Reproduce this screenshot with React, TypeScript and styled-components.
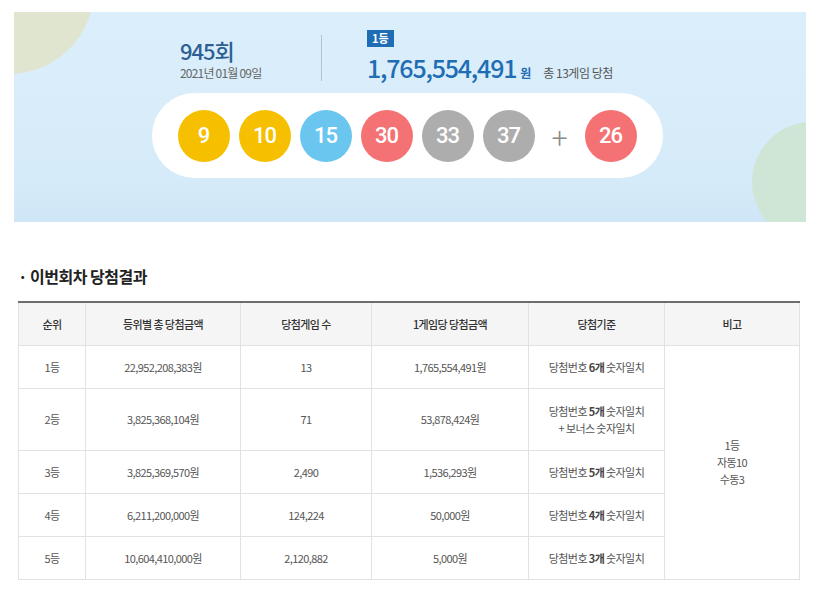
import React from "react";
import styled, { createGlobalStyle } from "styled-components";

const Global = createGlobalStyle`
  body { margin: 0; background: #fff; font-family: "Noto Sans CJK KR", "Noto Sans", sans-serif; }
`;

const Page = styled.div`
  width: 824px;
  padding: 12px 18px 0 14px;
  box-sizing: border-box;
`;

const Banner = styled.div`
  position: relative;
  overflow: hidden;
  height: 210px;
  background: linear-gradient(180deg, #dbeefb 0%, #d6ebf9 80%, #cfe6f7 100%);
  display: flex;
  flex-direction: column;
  align-items: center;
  width: 792px;
`;

const Blob = styled.div<{ $pos: "tl" | "br" }>`
  position: absolute;
  border-radius: 50%;
  background: ${(p) => (p.$pos === "tl" ? "#dfe5cf" : "#cfe6d6")};
  width: ${(p) => (p.$pos === "tl" ? "170px" : "120px")};
  height: ${(p) => (p.$pos === "tl" ? "170px" : "120px")};
  ${(p) => (p.$pos === "tl" ? "left:-90px; top:-108px;" : "right:-66px; bottom:-20px;")}
`;

const Info = styled.div`
  display: flex;
  align-items: center;
  margin-top: 18px;
  margin-left: 140px;
  width: 600px;
`;

const Draw = styled.div`
  width: 141px;
  display: flex;
  flex-direction: column;
`;

const DrawNo = styled.div`
  font-size: 22px;
  font-weight: 500;
  color: #2d5f93;
  letter-spacing: -1px;
  line-height: 30px;
`;

const DateText = styled.div`
  font-size: 12px;
  color: #666;
  letter-spacing: -0.8px;
  line-height: 16px;
`;

const Divider = styled.div`
  width: 1px;
  height: 46px;
  background: #aac4d8;
  margin-right: 45px;
`;

const Prize = styled.div`
  display: flex;
  flex-direction: column;
  align-items: flex-start;
`;

const Badge = styled.span`
  background: #1f6db4;
  color: #fff;
  font-size: 11px;
  font-weight: 700;
  padding: 0 5px;
  line-height: 17px;
`;

const AmountRow = styled.div`
  display: flex;
  align-items: baseline;
  gap: 4px;
  margin-top: 2px;
`;

const Amount = styled.span`
  font-size: 25px;
  color: #1f6db4;
  font-weight: 500;
  letter-spacing: -1.2px;
`;

const Won = styled.span`
  font-size: 12px;
  color: #1f6db4;
  font-weight: 700;
  margin-right: 8px;
`;

const Games = styled.span`
  font-size: 12px;
  color: #555;
  letter-spacing: -0.5px;
`;

const Pill = styled.div`
  margin-top: 8px;
  margin-left: -6px;
  width: 511px;
  height: 85px;
  border-radius: 43px;
  background: #fff;
  display: flex;
  align-items: center;
  justify-content: center;
  gap: 9px;
`;

const Ball = styled.div<{ $c: string }>`
  width: 52px;
  height: 52px;
  border-radius: 50%;
  background: ${(p) => p.$c};
  color: #fff;
  font-size: 22px;
  font-weight: 500;
  display: flex;
  align-items: center;
  justify-content: center;
  letter-spacing: -1px;
  font-family: "Roboto", sans-serif;
`;

const Plus = styled.div`
  font-size: 30px;
  color: #888;
  width: 32px;
  text-align: center;
  font-weight: 300;
`;

const Title = styled.h2`
  margin: 42px 0 13px 4px;
  font-size: 16px;
  font-weight: 700;
  color: #222;
  letter-spacing: -0.5px;
`;

const Table = styled.table`
  margin-left: 4px;
  width: 782px;
  border-collapse: collapse;
  border-top: 2px solid #6d6d6d;
  font-size: 11px;
  color: #555;
  letter-spacing: -0.6px;
  td, th { border: 1px solid #e2e2e2; text-align: center; padding: 0; }
  th { background: #f5f5f5; font-weight: 500; color: #333; height: 42px; }
  td { line-height: 17px; }
`;

const Row = styled.tr<{ $h: number }>`
  td { height: ${(p) => p.$h}px; }
`;

const Bold = styled.b`
  color: #444;
`;

const balls: [string, string][] = [
  ["9", "#f6c000"], ["10", "#f6c000"], ["15", "#6ac6ef"], ["30", "#f47273"], ["33", "#adadad"], ["37", "#adadad"],
];

const rows = [
  ["1등", "22,952,208,383원", "13", "1,765,554,491원", "6", 42],
  ["2등", "3,825,368,104원", "71", "53,878,424원", "5+", 61],
  ["3등", "3,825,369,570원", "2,490", "1,536,293원", "5", 42],
  ["4등", "6,211,200,000원", "124,224", "50,000원", "4", 42],
  ["5등", "10,604,410,000원", "2,120,882", "5,000원", "3", 42],
] as const;

export default function App() {
  return (
    <Page>
      <Global />
      <Banner>
        <Blob $pos="tl" />
        <Blob $pos="br" />
        <Info>
          <Draw>
            <DrawNo>945회</DrawNo>
            <DateText>2021년 01월 09일</DateText>
          </Draw>
          <Divider />
          <Prize>
            <Badge>1등</Badge>
            <AmountRow>
              <Amount>1,765,554,491</Amount>
              <Won>원</Won>
              <Games>총 13게임 당첨</Games>
            </AmountRow>
          </Prize>
        </Info>
        <Pill>
          {balls.map(([n, c]) => (
            <Ball key={n} $c={c}>{n}</Ball>
          ))}
          <Plus>+</Plus>
          <Ball $c="#f47273">26</Ball>
        </Pill>
      </Banner>
      <Title>· 이번회차 당첨결과</Title>
      <Table>
        <colgroup>
          <col style={{ width: 67 }} />
          <col style={{ width: 155 }} />
          <col style={{ width: 131 }} />
          <col style={{ width: 157 }} />
          <col style={{ width: 136 }} />
          <col />
        </colgroup>
        <thead>
          <tr>
            <th>순위</th>
            <th>등위별 총 당첨금액</th>
            <th>당첨게임 수</th>
            <th>1게임당 당첨금액</th>
            <th>당첨기준</th>
            <th>비고</th>
          </tr>
        </thead>
        <tbody>
          {rows.map((r, i) => (
            <Row key={r[0]} $h={r[5]}>
              <td>{r[0]}</td>
              <td>{r[1]}</td>
              <td>{r[2]}</td>
              <td>{r[3]}</td>
              <td>
                {r[4] === "5+" ? (
                  <>
                    당첨번호 <Bold>5개</Bold> 숫자일치
                    <br />+ 보너스 숫자일치
                  </>
                ) : (
                  <>
                    당첨번호 <Bold>{r[4]}개</Bold> 숫자일치
                  </>
                )}
              </td>
              {i === 0 && (
                <td rowSpan={5}>
                  1등
                  <br />
                  자동10
                  <br />
                  수동3
                </td>
              )}
            </Row>
          ))}
        </tbody>
      </Table>
    </Page>
  );
}
